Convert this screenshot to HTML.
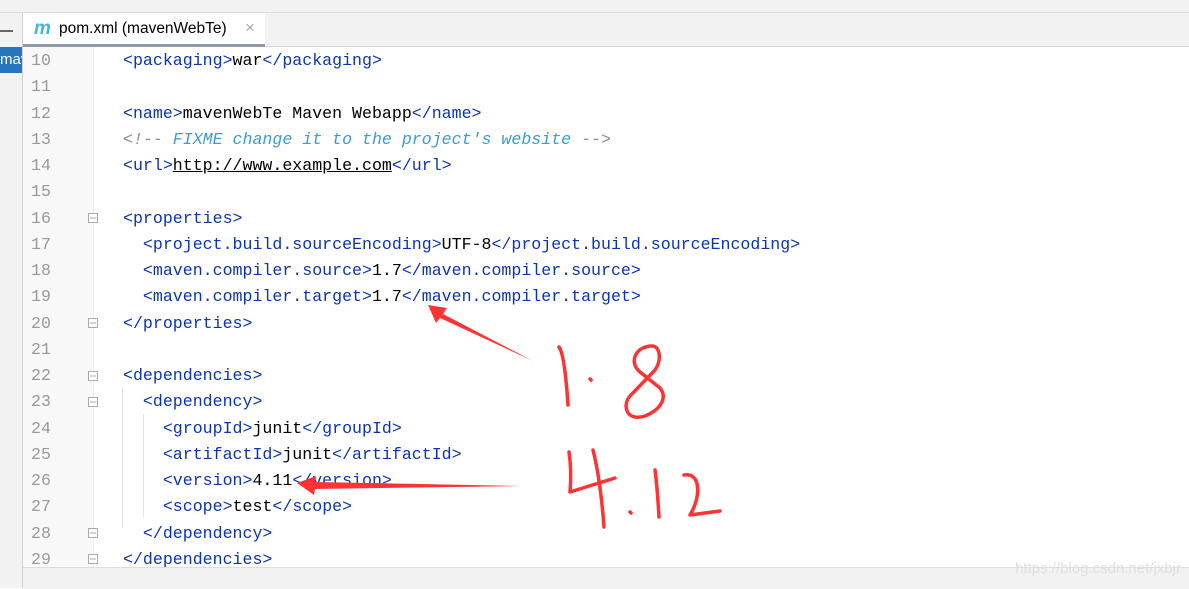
<!DOCTYPE html>
<html><head><style>
body{margin:0;width:1189px;height:588px;overflow:hidden;background:#fff;font-family:"Liberation Sans",sans-serif;position:relative}
.top{position:absolute;left:0;top:0;width:1189px;height:12px;background:#f2f2f2;border-bottom:1px solid #dcdcdc}
.tabbar{position:absolute;left:23px;top:13px;width:1166px;height:33px;background:#f2f2f2;border-bottom:1px solid #d6d6d6}
.tab{position:absolute;left:0;top:0;width:242px;height:31px;background:#fff;border-bottom:3px solid #8f99a8}
.tab .m{position:absolute;left:11px;top:5px;color:#40b6e0;font-style:italic;font-weight:bold;font-size:19px}
.tab .t{position:absolute;left:36px;top:7px;font-size:15.5px;color:#000}
.tab .x{position:absolute;left:222px;top:5px;font-size:17px;color:#aaa}
.left{position:absolute;left:0;top:13px;width:22px;height:575px;background:#f2f2f2;border-right:1px solid #d0d0d0}
.dash{position:absolute;left:0;top:17px;width:13px;height:2px;background:#666}
.sel{position:absolute;left:0;top:47px;width:22px;height:26px;background:#2675bf;color:#fff;font-size:15px;line-height:26px;overflow:hidden}
.gutter{position:absolute;left:23px;top:47px;width:70px;height:520px;background:#f8f8f8;border-right:1px solid #eee}
.code{position:absolute;left:0;top:48px;width:1189px;font-family:"Liberation Mono",monospace;font-size:16.6px}
.ln{position:absolute;left:31px;color:#999;height:26.26px;line-height:26.26px}
.l{position:absolute;left:123px;white-space:pre;height:26.26px;line-height:26.26px;color:#000}
.b{color:#0b34b4}.c{color:#3a9bd8;font-style:italic}.g{color:#8c8c8c;font-style:italic}
.bottom{position:absolute;left:23px;top:567px;width:1166px;height:21px;background:#f2f2f2;border-top:1px solid #ddd}
.wm{position:absolute;right:8px;top:560px;color:#e0e0e0;font-size:15px}
.guide{position:absolute;width:1px;background:#e4e4e4}
</style></head><body>
<div class="top"></div>
<div class="left"><div class="dash"></div></div>
<div class="sel">mav</div>
<div class="tabbar"><div class="tab"><span class="m">m</span><span class="t">pom.xml (mavenWebTe)</span><span class="x">×</span></div></div>
<div class="gutter"></div>
<div class="guide" style="left:143px;top:414px;height:103px"></div>
<div class="guide" style="left:122px;top:388px;height:140px"></div>
<div class="code">
<div class="ln" style="top:0">10</div><div class="l" style="top:0"><span class="b">&lt;packaging&gt;</span>war<span class="b">&lt;/packaging&gt;</span></div>
<div class="ln" style="top:26.26px">11</div>
<div class="ln" style="top:52.5px">12</div><div class="l" style="top:52.5px"><span class="b">&lt;name&gt;</span>mavenWebTe Maven Webapp<span class="b">&lt;/name&gt;</span></div>
<div class="ln" style="top:78.8px">13</div><div class="l" style="top:78.8px"><span class="g">&lt;!-- </span><span class="c">FIXME change it to the project's website</span><span class="g"> --&gt;</span></div>
<div class="ln" style="top:105px">14</div><div class="l" style="top:105px"><span class="b">&lt;url&gt;</span><u>http://www.example.com</u><span class="b">&lt;/url&gt;</span></div>
<div class="ln" style="top:131.3px">15</div>
<div class="ln" style="top:157.6px">16</div><div class="l" style="top:157.6px"><span class="b">&lt;properties&gt;</span></div>
<div class="ln" style="top:183.8px">17</div><div class="l" style="top:183.8px">  <span class="b">&lt;project.build.sourceEncoding&gt;</span>UTF-8<span class="b">&lt;/project.build.sourceEncoding&gt;</span></div>
<div class="ln" style="top:210px">18</div><div class="l" style="top:210px">  <span class="b">&lt;maven.compiler.source&gt;</span>1.7<span class="b">&lt;/maven.compiler.source&gt;</span></div>
<div class="ln" style="top:236.3px">19</div><div class="l" style="top:236.3px">  <span class="b">&lt;maven.compiler.target&gt;</span>1.7<span class="b">&lt;/maven.compiler.target&gt;</span></div>
<div class="ln" style="top:262.6px">20</div><div class="l" style="top:262.6px"><span class="b">&lt;/properties&gt;</span></div>
<div class="ln" style="top:288.9px">21</div>
<div class="ln" style="top:315px">22</div><div class="l" style="top:315px"><span class="b">&lt;dependencies&gt;</span></div>
<div class="ln" style="top:341.4px">23</div><div class="l" style="top:341.4px">  <span class="b">&lt;dependency&gt;</span></div>
<div class="ln" style="top:367.6px">24</div><div class="l" style="top:367.6px">    <span class="b">&lt;groupId&gt;</span>junit<span class="b">&lt;/groupId&gt;</span></div>
<div class="ln" style="top:393.9px">25</div><div class="l" style="top:393.9px">    <span class="b">&lt;artifactId&gt;</span>junit<span class="b">&lt;/artifactId&gt;</span></div>
<div class="ln" style="top:420px">26</div><div class="l" style="top:420px">    <span class="b">&lt;version&gt;</span>4.11<span class="b">&lt;/version&gt;</span></div>
<div class="ln" style="top:446.4px">27</div><div class="l" style="top:446.4px">    <span class="b">&lt;scope&gt;</span>test<span class="b">&lt;/scope&gt;</span></div>
<div class="ln" style="top:472.7px">28</div><div class="l" style="top:472.7px">  <span class="b">&lt;/dependency&gt;</span></div>
<div class="ln" style="top:499px">29</div><div class="l" style="top:499px"><span class="b">&lt;/dependencies&gt;</span></div>
</div>
<svg width="1189" height="588" style="position:absolute;left:0;top:0" fill="none" stroke="#aaa" stroke-width="1">
<g>
<rect x="88.5" y="213.5" width="9" height="9" fill="#fff"/><line x1="90" y1="218" x2="96" y2="218"/>
<rect x="88.5" y="318.5" width="9" height="9" fill="#fff"/><line x1="90" y1="323" x2="96" y2="323"/>
<rect x="88.5" y="371.5" width="9" height="9" fill="#fff"/><line x1="90" y1="376" x2="96" y2="376"/>
<rect x="88.5" y="397.5" width="9" height="9" fill="#fff"/><line x1="90" y1="402" x2="96" y2="402"/>
<rect x="88.5" y="528.5" width="9" height="9" fill="#fff"/><line x1="90" y1="533" x2="96" y2="533"/>
<rect x="88.5" y="554.5" width="9" height="9" fill="#fff"/><line x1="90" y1="559" x2="96" y2="559"/>
</g>
<g fill="#f33" stroke="none">
<polygon points="428,305 447,308 443,314 533,361 440,318 436,323"/>
<polygon points="297,483 316,476 315,482 522,486 315,489 314,495"/>
</g>
<g stroke="#f33" stroke-width="3.5" stroke-linecap="round" stroke-linejoin="round">
<path d="M559,347 C563,352 566,375 568,405"/>
<path d="M590,379 l1,1"/>
<path d="M652,346 C636,346 628,362 640,372 L660,388 C668,398 660,410 645,416 C626,422 622,405 630,396 L655,370 C662,360 660,346 652,346"/>
<path d="M569,452 C571,465 571,480 570,492 L615,478"/>
<path d="M593,450 C598,470 602,500 604,527"/>
<path d="M630,512 l1,1"/>
<path d="M655,470 C657,485 658,500 659,517"/>
<path d="M684,475 C700,472 702,495 690,515 L720,511"/>
</g>
</svg>
<div class="bottom"></div>
<div class="wm">https://blog.csdn.net/jxbjr</div>
</body></html>
